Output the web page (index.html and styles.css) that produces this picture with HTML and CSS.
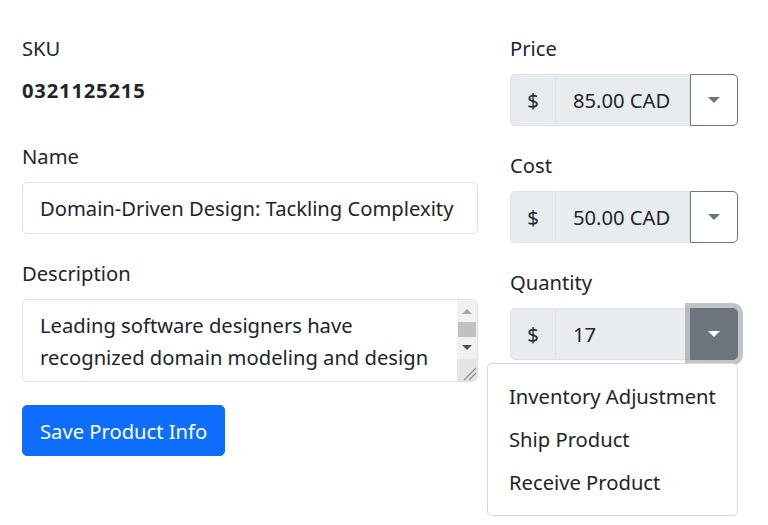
FILE: index.html
```html
<!DOCTYPE html>
<html>
<head>
<meta charset="utf-8">
<link rel="stylesheet" href="styles.css">
</head>
<body>
<div class="form">
  <div class="col">
    <div class="label">SKU</div>
    <div class="sku">0321125215</div>
    <div class="field">
      <div class="label">Name</div>
      <input class="control" type="text" value="Domain-Driven Design: Tackling Complexity in the Heart of Software">
    </div>
    <div class="field">
      <div class="label">Description</div>
      <div class="area-wrap">
        <textarea class="control area" rows="2">Leading software designers have recognized domain modeling and design as critical topics for at least twenty years, yet surprisingly little has been written about what needs to be done or how to do it.</textarea>
        <div class="scrollbar" aria-hidden="true">
          <span class="sb-btn up"></span>
          <span class="sb-thumb"></span>
          <span class="sb-btn down"></span>
          <span class="sb-track"></span>
          <span class="sb-corner"><svg width="20" height="22" viewBox="0 0 20 22"><path d="M7 21 L19 9 M12 21 L19 14" stroke="#8c8c8c" stroke-width="1.2" fill="none"/></svg></span>
        </div>
      </div>
    </div>
    <button class="btn-primary">Save Product Info</button>
  </div>
  <div class="col">
    <div class="field">
      <div class="label">Price</div>
      <div class="group">
        <span class="addon">$</span>
        <span class="value">85.00 CAD</span>
        <span class="toggle"><span class="caret"></span></span>
      </div>
    </div>
    <div class="field">
      <div class="label">Cost</div>
      <div class="group">
        <span class="addon">$</span>
        <span class="value">50.00 CAD</span>
        <span class="toggle"><span class="caret"></span></span>
      </div>
    </div>
    <div class="field">
      <div class="label">Quantity</div>
      <div class="group">
        <span class="addon">$</span>
        <span class="value">17</span>
        <span class="toggle active"><span class="caret"></span></span>
        <ul class="menu">
          <li>Inventory Adjustment</li>
          <li>Ship Product</li>
          <li>Receive Product</li>
        </ul>
      </div>
    </div>
  </div>
</div>
</body>
</html>
```
FILE: styles.css
```css
* { box-sizing: border-box; }
html, body { min-height: 525px; }
body {
  margin: 0;
  font-family: "Noto Sans", "Open Sans", sans-serif;
  font-size: 20.2px;
  line-height: 32px;
  color: #212529;
  background: #fff;
}
.form {
  display: grid;
  grid-template-columns: 456px 228px;
  column-gap: 32px;
  padding: 32px 30px 0 22px;
}
.col { display: flex; flex-direction: column; }
.label { margin-bottom: 10px; }
.sku { font-weight: 700; margin-bottom: 34px; letter-spacing: 0.8px; }
.field { margin-bottom: 23px; }
.control {
  display: block;
  width: 100%;
  font: inherit;
  color: #212529;
  border: 1px solid #dee2e6;
  border-radius: 5px;
  padding: 9px 17px;
  height: 52px;
  background: #fff;
  margin: 0;
}
.area-wrap { position: relative; }
.area {
  height: 83px;
  resize: none;
  overflow: hidden;
  line-height: 32px;
  padding-right: 37px;
}
.scrollbar {
  position: absolute;
  top: 1px;
  right: 1px;
  bottom: 1px;
  width: 20px;
  background: #f1f1f1;
  border-radius: 0 4px 4px 0;
  display: flex;
  flex-direction: column;
  overflow: hidden;
}
.sb-btn {
  height: 20px;
  flex: none;
  display: flex;
  align-items: center;
  justify-content: center;
}
.sb-btn::before {
  content: "";
  width: 0;
  height: 0;
  border-left: 5px solid transparent;
  border-right: 5px solid transparent;
}
.sb-btn.up { padding-top: 2px; }
.sb-btn.up::before { border-bottom: 5px solid #a3a3a3; }
.sb-btn.down::before { border-top: 5px solid #505050; }
.sb-thumb {
  height: 15px;
  flex: none;
  margin: 2px 1px 0;
  background: #c1c1c1;
}
.sb-track { flex: 1; }
.sb-corner {
  height: 22px;
  flex: none;
  background: #e4e4e4;
  display: block;
}
.sb-corner svg { display: block; }
.btn-primary {
  align-self: flex-start;
  font: inherit;
  color: #fff;
  background: #0d6efd;
  border: 1px solid #0d6efd;
  border-radius: 5px;
  padding: 0 17px;
  height: 51px;
  margin: 0;
}
.group {
  position: relative;
  display: flex;
  height: 52px;
}
.addon {
  width: 46px;
  background: #e9ecef;
  border: 1px solid #dee2e6;
  border-radius: 5px 0 0 5px;
  display: flex;
  align-items: center;
  justify-content: center;
}
.value {
  flex: 1;
  min-width: 0;
  white-space: nowrap;
  overflow: hidden;
  background: #e9ecef;
  border: 1px solid #dee2e6;
  border-left: 0;
  padding: 9px 17px;
}
.toggle {
  width: 48px;
  border: 1px solid #6c757d;
  border-radius: 0 5px 5px 0;
  background: #fff;
  display: flex;
  align-items: center;
  justify-content: center;
}
.caret {
  width: 0;
  height: 0;
  border-top: 6px solid #6c757d;
  border-left: 6px solid transparent;
  border-right: 6px solid transparent;
}
.toggle.active {
  background: #6c757d;
  box-shadow: 0 0 0 5px rgba(130, 138, 145, 0.5);
}
.toggle.active .caret { border-top-color: #fff; }
.menu {
  position: absolute;
  top: calc(100% + 3px);
  right: 0;
  width: 251px;
  margin: 0;
  padding: 11px 0;
  list-style: none;
  background: #fff;
  border: 1px solid rgba(0, 0, 0, 0.15);
  border-radius: 5px;
}
.menu li {
  padding: 5px 21px;
  line-height: 33px;
  white-space: nowrap;
}
```
